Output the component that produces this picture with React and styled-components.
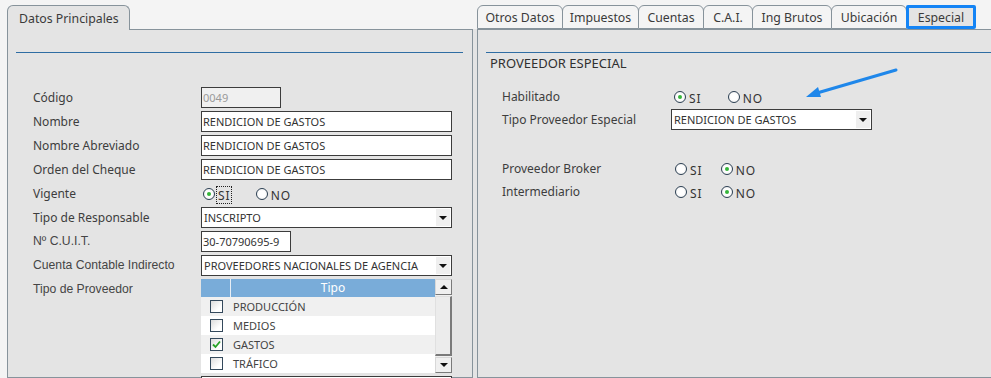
import React from "react";
import styled, { createGlobalStyle } from "styled-components";

const GlobalStyle = createGlobalStyle`
	body {
		margin: 0;
		background: #f4f4f4;
		font-family: "Noto Sans", "Open Sans", sans-serif;
		color: #3d3d3d;
	}
`;

const tipos = [
	{ name: "PRODUCCIÓN", checked: false },
	{ name: "MEDIOS", checked: false },
	{ name: "GASTOS", checked: true },
	{ name: "TRÁFICO", checked: false },
];

const rightTabs = [
	{ label: "Otros Datos", w: 86 },
	{ label: "Impuestos", w: 77 },
	{ label: "Cuentas", w: 66 },
	{ label: "C.A.I.", w: 50 },
	{ label: "Ing Brutos", w: 80 },
	{ label: "Ubicación", w: 76 },
];

function Radio({ checked, label, focus }) {
	return (
		<RadioItem>
			<RadioDot checked={checked} />
			<RadioText focus={focus}>{label}</RadioText>
		</RadioItem>
	);
}

function Select({ value, width }) {
	return (
		<SelectBox style={width ? { width } : undefined}>
			<SelectValue>{value}</SelectValue>
			<SelectButton>
				<Caret />
			</SelectButton>
		</SelectBox>
	);
}

function App() {
	return (
		<Page>
			<GlobalStyle />
			<Column width="466px">
				<TabStrip>
					<Tab w={123} current>
						Datos Principales
					</Tab>
				</TabStrip>
				<Body>
					<Divider inset="0 9px 0 8px" />
					<Form>
						<Label>Código</Label>
						<Input width="80px" disabled>
							0049
						</Input>
						<Label>Nombre</Label>
						<Input>RENDICION DE GASTOS</Input>
						<Label>Nombre Abreviado</Label>
						<Input>RENDICION DE GASTOS</Input>
						<Label>Orden del Cheque</Label>
						<Input>RENDICION DE GASTOS</Input>
						<Label>Vigente</Label>
						<RadioGroup offset="2px" spread="25px">
							<Radio checked label="SI" focus />
							<Radio label="NO" />
						</RadioGroup>
						<Label>Tipo de Responsable</Label>
						<Select value="INSCRIPTO" />
						<Label plain>Nº C.U.I.T.</Label>
						<Input width="90px">30-70790695-9</Input>
						<Label plain>Cuenta Contable Indirecto</Label>
						<Select value="PROVEEDORES NACIONALES DE AGENCIA" />
						<Label plain>Tipo de Proveedor</Label>
						<Grid>
							<GridTable>
								<HeaderRow>
									<HeadCell narrow />
									<HeadCell>Tipo</HeadCell>
								</HeaderRow>
								{tipos.map((t, i) => (
									<GridRow key={t.name} odd={i % 2 === 0}>
										<CheckCell>
											<CheckBox>
												{t.checked && (
													<svg width="11" height="11" viewBox="0 0 11 11">
														<path
															d="M2 5.5 L4.5 8 L9 2.5"
															fill="none"
															stroke="#27a327"
															strokeWidth="1.8"
														/>
													</svg>
												)}
											</CheckBox>
										</CheckCell>
										<TipoCell>{t.name}</TipoCell>
									</GridRow>
								))}
							</GridTable>
							<ScrollBar>
								<ScrollButton>
									<Caret up />
								</ScrollButton>
								<ScrollThumb />
								<ScrollButton>
									<Caret />
								</ScrollButton>
							</ScrollBar>
						</Grid>
						<span />
						<Input />
					</Form>
				</Body>
			</Column>
			<Column grow>
				<TabStrip>
					{rightTabs.map((t) => (
						<Tab key={t.label} w={t.w}>
							{t.label}
						</Tab>
					))}
					<Tab w={70} active>
						Especial
					</Tab>
				</TabStrip>
				<Body side>
					<Divider inset="0 0 0 8px" />
					<SectionTitle>PROVEEDOR ESPECIAL</SectionTitle>
					<SpecialForm>
						<Label>Habilitado</Label>
						<RadioGroup offset="3px" spread="26px">
							<Radio checked label="SI" />
							<Radio label="NO" />
						</RadioGroup>
						<Label>Tipo Proveedor Especial</Label>
						<Select value="RENDICION DE GASTOS" width="201px" />
						<Spacer />
						<Label>Proveedor Broker</Label>
						<RadioGroup offset="4px" spread="18px">
							<Radio label="SI" />
							<Radio checked label="NO" />
						</RadioGroup>
						<Label>Intermediario</Label>
						<RadioGroup offset="4px" spread="18px">
							<Radio label="SI" />
							<Radio checked label="NO" />
						</RadioGroup>
					</SpecialForm>
				</Body>
			</Column>
			<Pointer width="100" height="36" viewBox="0 0 100 36">
				<path d="M93 3 L14 26" stroke="#1f87ea" strokeWidth="3" fill="none" strokeLinecap="round" />
				<path d="M3 30 L15 20 L18 30 Z" fill="#1f87ea" />
			</Pointer>
		</Page>
	);
}

export default App;

const Page = styled.div`
	position: relative;
	display: flex;
	gap: 4px;
	height: 378px;
	padding: 5px 0 0 7px;
	box-sizing: border-box;
	overflow: hidden;
`;

const Column = styled.div`
	display: flex;
	flex-direction: column;
	width: ${(p) => p.width || "auto"};
	flex: ${(p) => (p.grow ? "1" : "none")};
	min-width: 0;
`;

const TabStrip = styled.div`
	display: flex;
	align-items: flex-end;
	height: 24px;
	position: relative;
	z-index: 1;
`;

const Tab = styled.div`
	box-sizing: border-box;
	width: ${(p) => p.w}px;
	height: ${(p) => (p.current ? "25px" : "24px")};
	margin-bottom: ${(p) => (p.current ? "-1px" : "0")};
	margin-right: -1px;
	display: flex;
	align-items: center;
	padding-left: ${(p) => (p.current ? "11px" : "0")};
	justify-content: ${(p) => (p.current ? "flex-start" : "center")};
	font-size: 12.3px;
	color: #3a3a3a;
	background: ${(p) => (p.current || p.active ? "#e4e4e4" : "#f4f4f4")};
	border: ${(p) => (p.active ? "3px solid #1484f5" : "1px solid #87939b")};
	border-bottom: ${(p) => (p.current ? "none" : p.active ? "3px solid #1484f5" : "1px solid #87939b")};
	border-radius: ${(p) => (p.active ? "2px" : "6px 6px 0 0")};
	padding-top: 1px;
`;

const Body = styled.div`
	flex: 1;
	background: #e4e4e4;
	border: 1px solid #87939b;
	border-right: ${(p) => (p.side ? "none" : "1px solid #87939b")};
	box-shadow: ${(p) => (p.side ? "-4px 0 0 #e4e4e4" : "none")};
	padding-top: 22px;
	box-sizing: border-box;
	min-height: 0;
`;

const Divider = styled.div`
	height: 1px;
	background: #2f6da3;
	margin: ${(p) => p.inset};
`;

const Form = styled.div`
	display: grid;
	grid-template-columns: 168px 251px;
	row-gap: 3px;
	padding: 34px 0 0 25px;
	align-items: start;
`;

const Label = styled.div`
	font-family: ${(p) =>
		p.plain ? `"Liberation Sans", Arial, sans-serif` : `"Noto Sans", "Open Sans", sans-serif`};
	font-size: ${(p) => (p.plain ? "12.2px" : "12px")};
	line-height: 21px;
	color: ${(p) => (p.plain ? "#454545" : "#3d3d3d")};
	white-space: nowrap;
`;

const Input = styled.div`
	box-sizing: border-box;
	width: ${(p) => p.width || "251px"};
	height: 21px;
	border: 1px solid #3c3c3c;
	background: ${(p) => (p.disabled ? "#f0f0f0" : "#fff")};
	color: ${(p) => (p.disabled ? "#9a9a9a" : "#333")};
	font-size: 11px;
	line-height: 19px;
	padding-left: 1px;
	white-space: nowrap;
	overflow: hidden;
`;

const SelectBox = styled.div`
	box-sizing: border-box;
	width: 251px;
	height: 21px;
	border: 1px solid #3c3c3c;
	background: #fff;
	display: flex;
	align-items: stretch;
`;

const SelectValue = styled.div`
	flex: 1;
	font-size: 11px;
	line-height: 19px;
	padding-left: 2px;
	color: #333;
	white-space: nowrap;
	overflow: hidden;
`;

const SelectButton = styled.div`
	width: 14px;
	margin: 1px 1px 1px 0;
	background: #efefef;
	display: flex;
	align-items: center;
	justify-content: center;
`;

const Caret = styled.span`
	width: 0;
	height: 0;
	border-left: 4px solid transparent;
	border-right: 4px solid transparent;
	border-top: ${(p) => (p.up ? "none" : "4px solid #111")};
	border-bottom: ${(p) => (p.up ? "4px solid #111" : "none")};
`;

const RadioGroup = styled.div`
	display: flex;
	align-items: center;
	gap: ${(p) => p.spread};
	height: 21px;
	padding-left: ${(p) => p.offset};
`;

const RadioItem = styled.div`
	display: flex;
	align-items: center;
	gap: 2px;
`;

const RadioDot = styled.span`
	box-sizing: border-box;
	width: 12px;
	height: 12px;
	border-radius: 50%;
	border: 1px solid #2b3f52;
	background: radial-gradient(circle at 50% 50%, #fff 40%, #ececec 100%);
	display: flex;
	align-items: center;
	justify-content: center;
	&::after {
		content: "";
		width: 4px;
		height: 4px;
		border-radius: 50%;
		background: ${(p) => (p.checked ? "#36b53a" : "transparent")};
	}
`;

const RadioText = styled.span`
	font-size: 12px;
	letter-spacing: 1px;
	color: #333;
	padding: 1px 0 0 1px;
	margin-top: 3px;
	outline: ${(p) => (p.focus ? "1px dotted #222" : "none")};
	line-height: 15px;
`;

const Grid = styled.div`
	display: flex;
	width: 251px;
	height: 94px;
	box-sizing: border-box;
`;

const GridTable = styled.div`
	flex: 1;
	display: flex;
	flex-direction: column;
`;

const HeaderRow = styled.div`
	display: flex;
	height: 18px;
	background: #79acd9;
`;

const HeadCell = styled.div`
	width: ${(p) => (p.narrow ? "29px" : "auto")};
	flex: ${(p) => (p.narrow ? "none" : "1")};
	border-right: ${(p) => (p.narrow ? "1px solid #e8eef5" : "none")};
	color: #fff;
	font-size: 12px;
	line-height: 18px;
	text-align: center;
`;

const GridRow = styled.div`
	display: flex;
	height: 19px;
	background: ${(p) => (p.odd ? "#f0f0f0" : "#fff")};
`;

const CheckCell = styled.div`
	width: 30px;
	display: flex;
	align-items: center;
	justify-content: center;
`;

const CheckBox = styled.span`
	box-sizing: border-box;
	width: 13px;
	height: 13px;
	border: 1px solid #34495c;
	background: linear-gradient(135deg, #dcdcdc, #fff 70%);
	display: flex;
	align-items: center;
	justify-content: center;
`;

const TipoCell = styled.div`
	flex: 1;
	font-size: 11px;
	line-height: 19px;
	color: #444;
	padding-left: 2px;
`;

const ScrollBar = styled.div`
	width: 17px;
	display: flex;
	flex-direction: column;
	background: #f0f0f0;
`;

const ScrollButton = styled.div`
	height: 16px;
	box-sizing: border-box;
	border: 1px solid #d8d8d8;
	border-right-color: #7a7a7a;
	border-bottom-color: #7a7a7a;
	background: #f0f0f0;
	display: flex;
	align-items: center;
	justify-content: center;
`;

const ScrollThumb = styled.div`
	flex: 1;
	margin: 1px 0;
	box-sizing: border-box;
	border: 1px solid #e0e0e0;
	border-right: 2px solid #7a7a7a;
	border-bottom: 2px solid #7a7a7a;
	background: #ececec;
`;

const SectionTitle = styled.div`
	font-size: 13px;
	line-height: 20px;
	color: #303030;
	padding-left: 12px;
`;

const SpecialForm = styled.div`
	display: grid;
	grid-template-columns: 169px 260px;
	row-gap: 2px;
	padding: 13px 0 0 24px;
	align-items: center;
`;

const Spacer = styled.div`
	grid-column: 1 / -1;
	height: 24px;
`;

const Pointer = styled.svg`
	position: absolute;
	left: 803px;
	top: 67px;
`;
